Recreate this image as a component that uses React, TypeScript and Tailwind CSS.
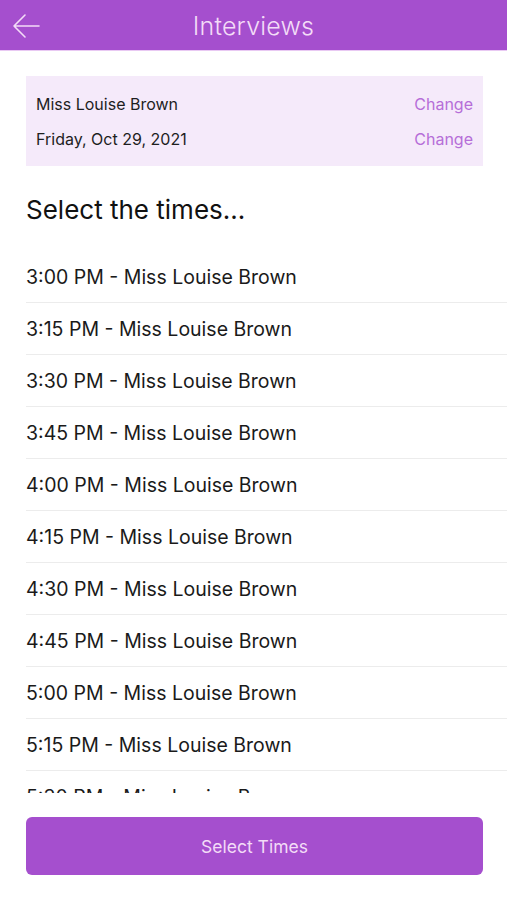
import React from "react";

const times = [
  "3:00 PM", "3:15 PM", "3:30 PM", "3:45 PM", "4:00 PM", "4:15 PM",
  "4:30 PM", "4:45 PM", "5:00 PM", "5:15 PM", "5:30 PM", "5:45 PM",
];

export default function App() {
  return (
    <div className="w-[507px] h-[900px] bg-white flex flex-col overflow-hidden" style={{ fontFamily: "Inter, 'Noto Sans', sans-serif" }}>
      <div className="h-[51px] bg-[#a54fce] flex items-center relative shrink-0 border-b border-[#e9c9f3] pt-[4px]">
        <svg className="absolute left-[12px] top-[13px]" width="28" height="26" viewBox="0 0 28 26" fill="none">
          <path d="M27 13H2M13 2L2 13l11 11" stroke="#f3dcf7" strokeWidth="1.6" strokeLinecap="round" strokeLinejoin="round" />
        </svg>
        <div className="w-full text-center text-[25px] text-[#f3dcf7] font-light tracking-[0.2px]">Interviews</div>
      </div>
      <div className="flex-1 flex flex-col pl-[26px] min-h-0">
        <div className="mt-[25px] mr-[24px] h-[90px] bg-[#f5eafa] px-[10px] flex flex-col justify-center gap-[14px] text-[16px]">
          <div className="flex justify-between items-center h-[21px]">
            <span className="text-[#1e1e1e]">Miss Louise Brown</span>
            <span className="text-[#b66ed8]">Change</span>
          </div>
          <div className="flex justify-between items-center h-[21px]">
            <span className="text-[#1e1e1e]">Friday, Oct 29, 2021</span>
            <span className="text-[#b66ed8]">Change</span>
          </div>
        </div>
        <div className="mt-[28px] h-[32px] leading-[32px] text-[26px] text-[#111]">Select the times...</div>
        <div className="mt-[25px] h-[542px] overflow-hidden shrink-0">
          {times.map((t) => (
            <div key={t} className="h-[52px] flex items-center border-b border-[#ececec] text-[19.5px] text-[#1a1a1a] pt-[2px]">
              {t} - Miss Louise Brown
            </div>
          ))}
        </div>
        <div className="mt-[24px] mr-[24px] h-[58px] rounded-[6px] bg-[#a54fce] flex items-center justify-center text-[17.5px] text-[#f3dcf7] pt-[2px]">
          Select Times
        </div>
      </div>
    </div>
  );
}
